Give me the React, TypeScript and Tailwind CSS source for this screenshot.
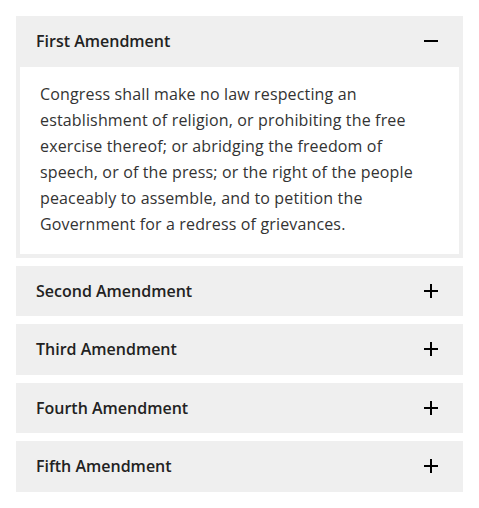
import React, { useState } from 'react';

const amendments = [
  {
    title: 'First Amendment',
    lines: [
      'Congress shall make no law respecting an',
      'establishment of religion, or prohibiting the free',
      'exercise thereof; or abridging the freedom of',
      'speech, or of the press; or the right of the people',
      'peaceably to assemble, and to petition the',
      'Government for a redress of grievances.',
    ],
  },
  { title: 'Second Amendment', lines: [] },
  { title: 'Third Amendment', lines: [] },
  { title: 'Fourth Amendment', lines: [] },
  { title: 'Fifth Amendment', lines: [] },
];

const App: React.FC = () => {
  const [open, setOpen] = useState<number | null>(0);

  return (
    <div className="min-h-screen bg-white p-4 font-['Open_Sans',sans-serif]">
      <div className="flex flex-col gap-2">
        {amendments.map((a, i) => {
          const isOpen = open === i;
          return (
            <div key={a.title} className="bg-[#efefef]">
              <button
                onClick={() => setOpen(isOpen ? null : i)}
                className="flex h-[50.5px] w-full items-center justify-between pl-5 pr-[25px] text-left"
              >
                <span className="text-base font-semibold text-[#222]">{a.title}</span>
                <svg width="14" height="14" viewBox="0 0 14 14" className="text-black">
                  <rect x="0" y="6" width="14" height="2" fill="currentColor" />
                  {!isOpen && <rect x="6" y="0" width="2" height="14" fill="currentColor" />}
                </svg>
              </button>
              {isOpen && (
                <div className="mx-1 mb-1 bg-white px-5 pb-[17px] pt-[14px]">
                  <p className="whitespace-nowrap text-base leading-[26px] tracking-[0.15px] text-[#333]">
                    {a.lines.map((l) => (
                      <span key={l} className="block">{l}</span>
                    ))}
                  </p>
                </div>
              )}
            </div>
          );
        })}
      </div>
    </div>
  );
};

export default App;
